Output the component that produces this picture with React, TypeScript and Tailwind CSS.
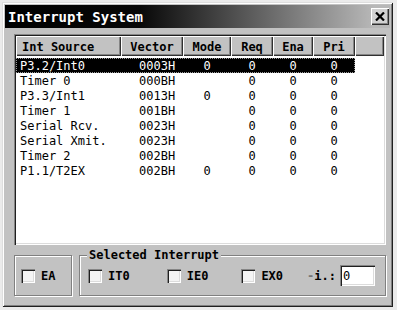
import React from "react";

type Row = { src: string; vec: string; mode: string };

const rows: Row[] = [
  { src: "P3.2/Int0", vec: "0003H", mode: "0" },
  { src: "Timer 0", vec: "000BH", mode: "" },
  { src: "P3.3/Int1", vec: "0013H", mode: "0" },
  { src: "Timer 1", vec: "001BH", mode: "" },
  { src: "Serial Rcv.", vec: "0023H", mode: "" },
  { src: "Serial Xmit.", vec: "0023H", mode: "" },
  { src: "Timer 2", vec: "002BH", mode: "" },
  { src: "P1.1/T2EX", vec: "002BH", mode: "0" },
];

const raised =
  "shadow-[inset_1px_1px_#ffffff,inset_-1px_-1px_#303030,inset_-2px_-2px_#858585]";
const sunken =
  "shadow-[inset_1px_1px_#858585,inset_2px_2px_#202020,inset_-1px_-1px_#ffffff,inset_-2px_-2px_#dcdcdc]";

function Check({ label, className }: { label: string; className?: string }) {
  return (
    <div className={"flex items-center " + (className ?? "")}>
      <span className={"h-[14px] w-[14px] bg-[#f4f4f4] " + sunken} />
      <span className="ml-[6px] pt-[1px] text-[12px] font-bold leading-none">{label}</span>
    </div>
  );
}

function HeaderCell({ w, children, left }: { w: string; children?: React.ReactNode; left?: boolean }) {
  return (
    <div
      className={
        w +
        " h-[20px] shrink-0 bg-[#c2c2c2] pt-[2px] text-[12px] font-bold leading-[18px] " +
        (left ? "pl-[6px] text-left " : "text-center ") +
        raised
      }
    >
      {children}
    </div>
  );
}

export default function App() {
  return (
    <div className="h-[310px] w-[397px] bg-[#ebebeb] pl-[2px] pt-[2px] font-['DejaVu_Sans_Mono',monospace] text-black">
      <div
        className={
          "flex h-[305px] w-[391px] flex-col bg-[#c2c2c2] p-[3px] " +
          "shadow-[inset_1px_1px_#dedede,inset_-1px_-1px_#202020,inset_2px_2px_#ffffff,inset_-2px_-2px_#808080]"
        }
      >
        {/* title bar */}
        <div className="flex h-[23px] shrink-0 items-center justify-between bg-[linear-gradient(90deg,#000_0%,#080808_35%,#b8b8b8_96%)] pl-[3px] pr-[1px]">
          <span className="text-[14px] font-bold leading-none text-white">Interrupt System</span>
          <div className={"flex h-[17px] w-[18px] items-center justify-center bg-[#d2d2d2] " + raised}>
            <svg width="10" height="9" viewBox="0 0 10 9">
              <path d="M1 0.5 L9 8.5 M9 0.5 L1 8.5" stroke="#000" strokeWidth="2.2" />
            </svg>
          </div>
        </div>

        {/* list view */}
        <div className={"ml-[9px] mt-[6px] h-[211px] w-[372px] bg-white p-[2px] " + sunken}>
          <div className="flex">
            <HeaderCell w="w-[105px]" left>
              Int Source
            </HeaderCell>
            <HeaderCell w="w-[62px]">Vector</HeaderCell>
            <HeaderCell w="w-[48px]">Mode</HeaderCell>
            <HeaderCell w="w-[42px]">Req</HeaderCell>
            <HeaderCell w="w-[40px]">Ena</HeaderCell>
            <HeaderCell w="w-[42px]">Pri</HeaderCell>
            <HeaderCell w="w-[29px]" />
          </div>
          <div className="mt-[2px] flex flex-col">
            {rows.map((r, i) => {
              const sel = i === 0;
              return (
                <div key={r.src} className="flex h-[15px] text-[12px] leading-[13px]">
                  <div
                    className={
                      "flex w-[339px] shrink-0 pt-[2px] " +
                      (sel ? "bg-black text-white outline-1 outline-dotted -outline-offset-1 outline-[#9a9a9a]" : "")
                    }
                  >
                    <span className="w-[105px] shrink-0 whitespace-pre pl-[4px]">{r.src}</span>
                    <span className="w-[62px] shrink-0 pl-[18px]">{r.vec}</span>
                    <span className="w-[48px] shrink-0 text-center">{r.mode}</span>
                    <span className="w-[42px] shrink-0 text-center">0</span>
                    <span className="w-[40px] shrink-0 text-center">0</span>
                    <span className="w-[42px] shrink-0 text-center">0</span>
                  </div>
                </div>
              );
            })}
          </div>
        </div>

        {/* bottom groups */}
        <div className="ml-[9px] mt-[10px] flex gap-[7px]">
          <div className="flex h-[41px] w-[58px] items-center border border-[#808080] pl-[6px] shadow-[inset_1px_1px_#ffffff,1px_1px_#ffffff]">
            <Check label="EA" />
          </div>
          <div className="relative flex h-[41px] w-[307px] items-center border border-[#808080] pl-[8px] shadow-[inset_1px_1px_#ffffff,1px_1px_#ffffff]">
            <span className="absolute left-[7px] top-[-7px] bg-[#c2c2c2] px-[2px] text-[12px] font-bold leading-[12px]">
              Selected Interrupt
            </span>
            <Check label="IT0" />
            <Check label="IE0" className="ml-[37px]" />
            <Check label="EX0" className="ml-[33px]" />
            <span className="ml-[24px] pt-[1px] text-[12px] font-bold leading-none">
              <span className="text-[#777]">-</span>i.:
            </span>
            <div className={"ml-[4px] flex h-[21px] w-[35px] items-center bg-white pl-[3px] text-[12px] " + sunken}>
              0
            </div>
          </div>
        </div>
      </div>
    </div>
  );
}
